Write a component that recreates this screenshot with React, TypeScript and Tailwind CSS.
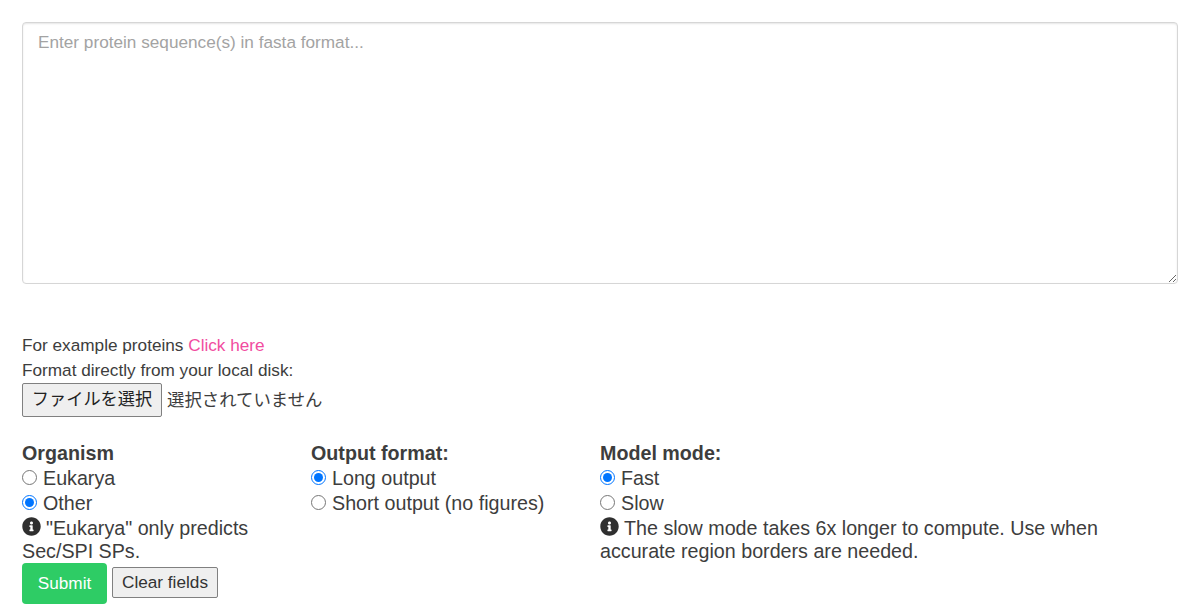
import { FaInfoCircle } from 'react-icons/fa';

const FONT = "font-['Liberation_Sans','Noto_Sans_CJK_JP',sans-serif]";

function Radio({ name, label, checked }: { name: string; label: string; checked?: boolean }) {
  return (
    <label className="flex h-[25px] items-center gap-[6px]">
      <input
        type="radio"
        name={name}
        defaultChecked={checked}
        className="h-[15px] w-[15px] -translate-y-px accent-[#0075ff]"
      />
      <span>{label}</span>
    </label>
  );
}

function Note({ children }: { children: string }) {
  return (
    <p className="pt-px leading-[23px]">
      <FaInfoCircle className="mr-[5px] inline-block h-[19px] w-[19px] align-[-1px] text-[#2f2f2f]" />
      {children}
    </p>
  );
}

export default function App() {
  return (
    <div className={`${FONT} h-[613px] overflow-hidden bg-white px-[22px] pt-[22px] text-[17.2px] text-[#3d3d3d]`}>
      <textarea
        placeholder="Enter protein sequence(s) in fasta format..."
        className="block h-[262px] w-full rounded-[4px] border border-[#d6d6d6] px-[15px] py-[7px] leading-[24px] shadow-[inset_0_1px_2px_rgba(10,10,10,0.1)] placeholder:text-[#a3a3a3]"
      />

      <div className="mt-[49px] leading-[25px]">
        <p>
          For example proteins <a className="text-[#f14ca0]">Click here</a>
        </p>
        <p>Format directly from your local disk:</p>
      </div>

      <div className="flex items-center gap-[5px]">
        <button className="h-[34px] w-[140px] rounded-[2px] border border-[#808080] bg-[#efefef] text-center text-[#222]">
          ファイルを選択
        </button>
        <span className="text-[17.4px]">選択されていません</span>
      </div>

      <div className="mt-[24px] flex text-[19.7px]">
        <div className="w-[289px] pr-[24px]">
          <h3 className="font-bold leading-[25px]">Organism</h3>
          <Radio name="organism" label="Eukarya" />
          <Radio name="organism" label="Other" checked />
          <Note>"Eukarya" only predicts Sec/SPI SPs.</Note>
        </div>
        <div className="w-[289px]">
          <h3 className="font-bold leading-[25px]">Output format:</h3>
          <Radio name="output" label="Long output" checked />
          <Radio name="output" label="Short output (no figures)" />
        </div>
        <div className="w-[520px]">
          <h3 className="font-bold leading-[25px]">Model mode:</h3>
          <Radio name="mode" label="Fast" checked />
          <Radio name="mode" label="Slow" />
          <Note>The slow mode takes 6x longer to compute. Use when accurate region borders are needed.</Note>
        </div>
      </div>

      <div className="flex items-center gap-[5px]">
        <button className="h-[41px] w-[85px] rounded-[4px] bg-[#2ecc65] text-white">Submit</button>
        <button className="mb-[2px] h-[31px] w-[106px] rounded-[2px] border border-[#808080] bg-[#efefef] text-[#333]">
          Clear fields
        </button>
      </div>
    </div>
  );
}
